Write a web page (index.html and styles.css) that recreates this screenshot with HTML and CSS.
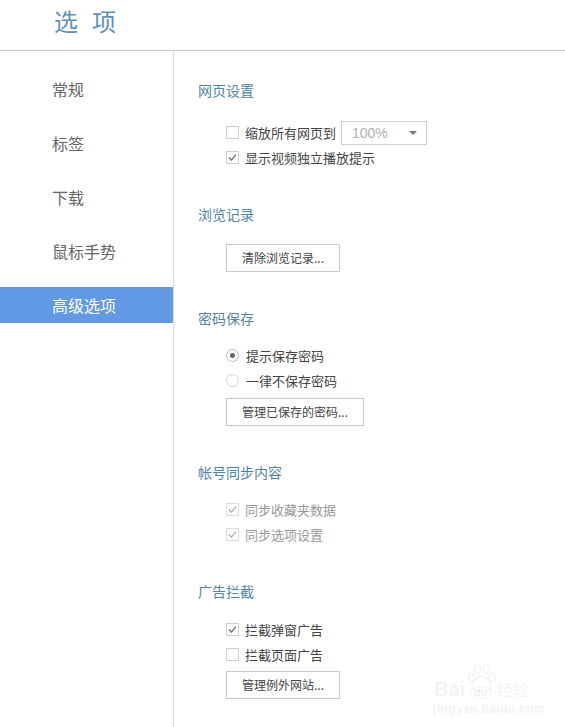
FILE: index.html
```html
<!DOCTYPE html>
<html lang="zh-CN">
<head>
<meta charset="utf-8">
<title>选项</title>
<link rel="stylesheet" href="styles.css">
</head>
<body>
<div class="page">
  <header class="header"><h1 class="title"><span>选</span><span>项</span></h1></header>
  <div class="layout">
    <nav class="nav">
      <a class="nav-item">常规</a>
      <a class="nav-item">标签</a>
      <a class="nav-item">下载</a>
      <a class="nav-item">鼠标手势</a>
      <a class="nav-item nav-item--active">高级选项</a>
    </nav>
    <main class="content">
      <section class="section section--wide">
        <h2 class="heading">网页设置</h2>
        <div class="row">
          <span class="box"></span><span class="label">缩放所有网页到</span>
          <div class="select"><span>100%</span><i class="caret"></i></div>
        </div>
        <div class="row">
          <span class="box"><svg class="tick" viewBox="0 0 13 13"><path d="M3 6.5 5.5 9.2 10 3.6"/></svg></span><span class="label">显示视频独立播放提示</span>
        </div>
      </section>
      <section class="section section--wide">
        <h2 class="heading">浏览记录</h2>
        <button class="btn btn--plain">清除浏览记录...</button>
      </section>
      <section class="section">
        <h2 class="heading">密码保存</h2>
        <div class="row"><span class="radio radio--on"></span><span class="label label--radio">提示保存密码</span></div>
        <div class="row"><span class="radio"></span><span class="label label--radio">一律不保存密码</span></div>
        <button class="btn btn--long">管理已保存的密码...</button>
      </section>
      <section class="section section--tight">
        <h2 class="heading">帐号同步内容</h2>
        <div class="row row--off"><span class="box"><svg class="tick" viewBox="0 0 13 13"><path d="M3 6.5 5.5 9.2 10 3.6"/></svg></span><span class="label">同步收藏夹数据</span></div>
        <div class="row row--off"><span class="box"><svg class="tick" viewBox="0 0 13 13"><path d="M3 6.5 5.5 9.2 10 3.6"/></svg></span><span class="label">同步选项设置</span></div>
      </section>
      <section class="section section--mid">
        <h2 class="heading">广告拦截</h2>
        <div class="row"><span class="box"><svg class="tick" viewBox="0 0 13 13"><path d="M3 6.5 5.5 9.2 10 3.6"/></svg></span><span class="label">拦截弹窗广告</span></div>
        <div class="row"><span class="box"></span><span class="label">拦截页面广告</span></div>
        <button class="btn">管理例外网站...</button>
      </section>
    </main>
  </div>
  <div class="mark">
    <svg class="mark-paw" viewBox="0 0 34 32"><g fill="none" stroke="#f2f2f2" stroke-width="1.6"><ellipse cx="6" cy="15" rx="3.4" ry="4.6"/><ellipse cx="13" cy="6" rx="3.6" ry="5"/><ellipse cx="23" cy="6" rx="3.6" ry="5"/><ellipse cx="30" cy="15" rx="3.4" ry="4.6"/><path d="M18 14c5 0 10 6 10 11 0 4-4 6-10 6S7 29 7 25c0-5 6-11 11-11Z"/></g></svg>
    <div class="mark-top"><span class="mark-bai">Bai</span><span class="mark-du">du</span><span class="mark-jy">经验</span></div>
    <div class="mark-url">jingyan.baidu.com</div>
  </div>
</div>
</body>
</html>
```
FILE: styles.css
```css
* { box-sizing: border-box; }
html, body { margin: 0; padding: 0; background: #fff; }
body { font-family: "Noto Sans CJK SC", "Liberation Sans", sans-serif; overflow: hidden; }
.page { position: relative; width: 565px; height: 727px; overflow: hidden; }

.header { height: 51px; border-bottom: 1px solid #c9c9c9; padding: 7px 0 0 54px; }
.title { margin: 0; display: flex; gap: 14px; font-size: 24px; font-weight: 400; line-height: 28px; color: #5a92bd; }

.layout { display: flex; height: 676px; }
.nav { width: 174px; flex: none; border-right: 1px solid #dedede; padding-top: 20px; display: flex; flex-direction: column; gap: 18px; }
.nav-item { height: 36px; line-height: 36px; padding-left: 52px; font-size: 16px; color: #666; }
.nav-item--active { background: #6199e5; color: #fff; }

.content { flex: 1; padding: 29px 0 0 24px; }
.section { padding-bottom: 34px; }
.heading { margin: 0 0 15px; height: 20px; font-size: 14px; line-height: 20px; font-weight: 400; color: #4f86a6; }
.section--wide .heading { margin-bottom: 20px; }
.section--mid .heading { margin-bottom: 16px; }

.row { display: flex; align-items: center; height: 25px; margin-left: 28px; font-size: 13px; color: #444; }
.row--off { color: #999; }
.box { width: 13px; height: 13px; flex: none; border: 1px solid #cfcfcf; background: #fff; position: relative; }
.row--off .box { border-color: #dcdcdc; }
.tick { position: absolute; left: -1px; top: -1px; width: 13px; height: 13px; fill: none; stroke: #666; stroke-width: 1.2; }
.row--off .tick { stroke: #aaa; }
.label { margin-left: 6px; line-height: 25px; }
.label--radio { margin-left: 7px; }
.radio { width: 13px; height: 13px; flex: none; border: 1px solid #d2d2d2; border-radius: 50%; display: flex; align-items: center; justify-content: center; }
.radio--on { border-color: #bbb; }
.radio--on::after { content: ""; width: 5px; height: 5px; border-radius: 50%; background: #666; }

.select { width: 86px; height: 24px; margin-left: 5px; border: 1px solid #cfcfcf; padding: 0 9px 0 10px; display: flex; align-items: center; justify-content: space-between; font-family: "Liberation Sans", sans-serif; font-size: 14px; color: #b0b0b0; }
.caret { width: 0; height: 0; border-left: 4px solid transparent; border-right: 4px solid transparent; border-top: 4px solid #777; }

.btn { display: block; width: 114px; height: 28px; margin: 4px 0 3px 28px; padding: 0; border: 1px solid #c9c9c9; background: #fff; font: 12px/26px "Noto Sans CJK SC", sans-serif; color: #444; text-align: center; }
.btn--plain { margin: 0 0 2px 28px; }
.btn--long { width: 138px; margin: 5px 0 2px 28px; }

.mark { position: absolute; left: 433px; top: 664px; width: 104px; height: 52px; color: #f4f4f4; pointer-events: none; }
.mark-paw { position: absolute; left: 33px; top: 0; width: 30px; height: 28px; }
.mark-top { position: absolute; left: 1px; top: 14px; display: flex; align-items: baseline; font-family: "Liberation Sans", sans-serif; font-weight: 700; line-height: 22px; }
.mark-bai { font-size: 20px; }
.mark-du { font-size: 11px; line-height: 11px; margin: 0 5px 0 5px; padding: 0 3px; border: 1px solid #f2f2f2; border-radius: 50%; color: #f0f0f0; }
.mark-jy { font-family: "Noto Sans CJK SC", sans-serif; font-size: 16px; font-weight: 400; }
.mark-url { position: absolute; left: 0; top: 38px; font-family: "Liberation Sans", sans-serif; font-size: 12px; font-weight: 700; line-height: 14px; letter-spacing: 0.4px; white-space: nowrap; }
```
